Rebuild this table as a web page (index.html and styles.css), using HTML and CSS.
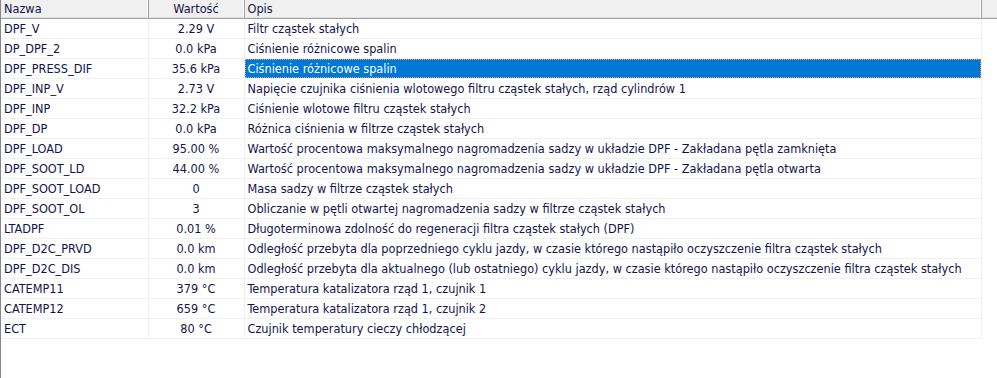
FILE: index.html
```html
<!DOCTYPE html>
<html lang="pl">
<head>
    <meta charset="UTF-8">
    <title>Parametry DPF</title>
    <link rel="stylesheet" href="styles.css">
</head>
<body>

<div class="list-view">
    <table class="params">
        <colgroup>
            <col class="col-name">
            <col class="col-value">
            <col class="col-desc">
            <col class="col-tail">
        </colgroup>
        <thead>
            <tr>
                <th class="name">Nazwa</th>
                <th class="value">Wartość</th>
                <th class="desc">Opis</th>
                <th class="tail"></th>
            </tr>
        </thead>
        <tbody>
            <tr><td class="name">DPF_V</td><td class="value">2.29 V</td><td class="desc">Filtr cząstek stałych</td><td class="tail"></td></tr>
            <tr><td class="name">DP_DPF_2</td><td class="value">0.0 kPa</td><td class="desc">Ciśnienie różnicowe spalin</td><td class="tail"></td></tr>
            <tr class="selected"><td class="name">DPF_PRESS_DIF</td><td class="value">35.6 kPa</td><td class="desc"><span class="focus">Ciśnienie różnicowe spalin</span></td><td class="tail"></td></tr>
            <tr><td class="name">DPF_INP_V</td><td class="value">2.73 V</td><td class="desc">Napięcie czujnika ciśnienia wlotowego filtru cząstek stałych, rząd cylindrów 1</td><td class="tail"></td></tr>
            <tr><td class="name">DPF_INP</td><td class="value">32.2 kPa</td><td class="desc">Ciśnienie wlotowe filtru cząstek stałych</td><td class="tail"></td></tr>
            <tr><td class="name">DPF_DP</td><td class="value">0.0 kPa</td><td class="desc">Różnica ciśnienia w filtrze cząstek stałych</td><td class="tail"></td></tr>
            <tr><td class="name">DPF_LOAD</td><td class="value">95.00 %</td><td class="desc">Wartość procentowa maksymalnego nagromadzenia sadzy w układzie DPF - Zakładana pętla zamknięta</td><td class="tail"></td></tr>
            <tr><td class="name">DPF_SOOT_LD</td><td class="value">44.00 %</td><td class="desc">Wartość procentowa maksymalnego nagromadzenia sadzy w układzie DPF - Zakładana pętla otwarta</td><td class="tail"></td></tr>
            <tr><td class="name">DPF_SOOT_LOAD</td><td class="value">0</td><td class="desc">Masa sadzy w filtrze cząstek stałych</td><td class="tail"></td></tr>
            <tr><td class="name">DPF_SOOT_OL</td><td class="value">3</td><td class="desc">Obliczanie w pętli otwartej nagromadzenia sadzy w filtrze cząstek stałych</td><td class="tail"></td></tr>
            <tr><td class="name">LTADPF</td><td class="value">0.01 %</td><td class="desc">Długoterminowa zdolność do regeneracji filtra cząstek stałych (DPF)</td><td class="tail"></td></tr>
            <tr><td class="name">DPF_D2C_PRVD</td><td class="value">0.0 km</td><td class="desc">Odległość przebyta dla poprzedniego cyklu jazdy, w czasie którego nastąpiło oczyszczenie filtra cząstek stałych</td><td class="tail"></td></tr>
            <tr><td class="name">DPF_D2C_DIS</td><td class="value">0.0 km</td><td class="desc">Odległość przebyta dla aktualnego (lub ostatniego) cyklu jazdy, w czasie którego nastąpiło oczyszczenie filtra cząstek stałych</td><td class="tail"></td></tr>
            <tr><td class="name">CATEMP11</td><td class="value">379 °C</td><td class="desc">Temperatura katalizatora rząd 1, czujnik 1</td><td class="tail"></td></tr>
            <tr><td class="name">CATEMP12</td><td class="value">659 °C</td><td class="desc">Temperatura katalizatora rząd 1, czujnik 2</td><td class="tail"></td></tr>
            <tr><td class="name">ECT</td><td class="value">80 °C</td><td class="desc">Czujnik temperatury cieczy chłodzącej</td><td class="tail"></td></tr>
        </tbody>
    </table>
</div>

</body>
</html>
```

FILE: styles.css
```css
/* Page */
body {
    margin: 0;
    background: #fff;
    font-family: 'DejaVu Sans', 'Liberation Sans', sans-serif;
    font-stretch: condensed;
    font-size: 12.6px;
    color: #14144a;
}

/* List view frame */
.list-view {
    height: 378px;
    box-sizing: border-box;
    border-left: 1px solid #828790;
    overflow: hidden;
}

.params {
    border-collapse: collapse;
    table-layout: fixed;
    width: 1001px;
}

.col-name { width: 147px; }
.col-value { width: 96px; }
.col-desc { width: 737px; }
.col-tail { width: 21px; }

/* Header row */
.params th {
    height: 17px;
    padding: 0 3px 1px;
    background: #f0f0f0;
    font-weight: normal;
    text-align: left;
    white-space: nowrap;
    border-right: 1px solid #a0a0a0;
    border-bottom: 1px solid #a0a0a0;
    box-shadow: inset -1px 0 0 #fff, inset 0 -1px 0 #e3e3e3;
}

.params th.value {
    text-align: center;
}

/* Data rows */
.params td {
    height: 19px;
    padding: 0 3px;
    white-space: nowrap;
    overflow: hidden;
    border-right: 1px solid #f0f0f0;
    border-bottom: 1px solid #f0f0f0;
}

.params td.value {
    text-align: center;
}

.params td.tail {
    border-bottom: none;
}

/* Selected item: only the description cell gets the highlight */
.params tr.selected td.desc {
    padding: 0;
    background: #0078d7;
    color: #fff;
}

.focus {
    display: block;
    line-height: 17px;
    padding: 0 2px;
    border: 1px dotted #f0a040;
}
```
